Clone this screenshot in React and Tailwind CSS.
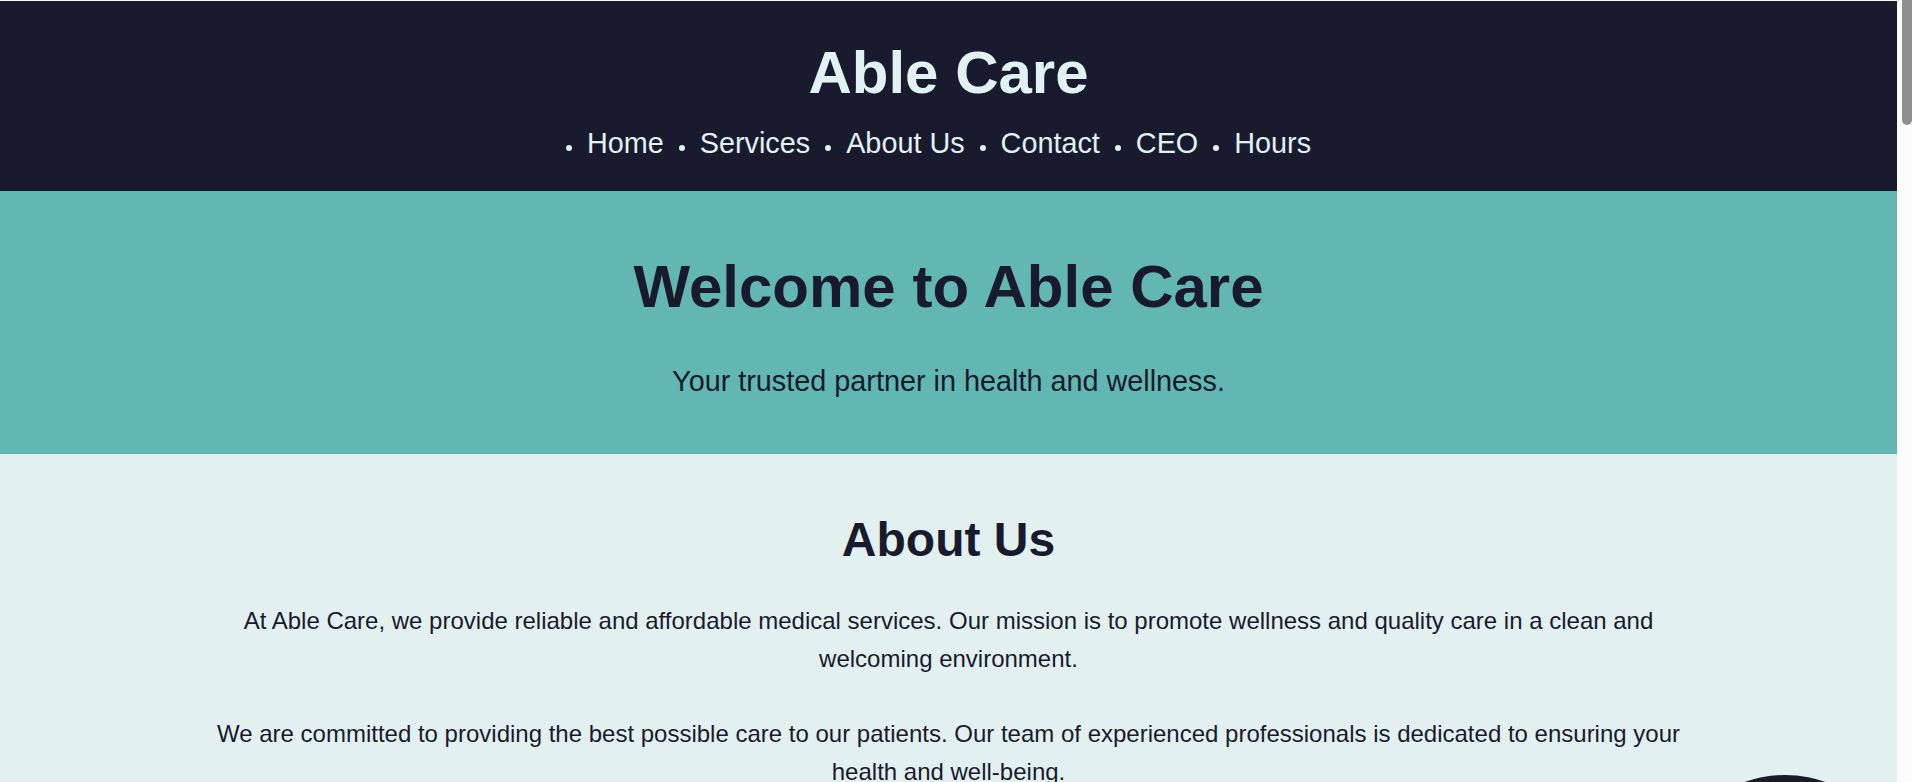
import React from "react";

const navItems = ["Home", "Services", "About Us", "Contact", "CEO", "Hours"];

export default function App() {
  return (
    <div className="flex h-[782px] w-full overflow-hidden bg-white font-['Liberation_Sans',Arial,sans-serif]">
      <div className="relative min-w-0 flex-1 overflow-hidden pt-px">
        <header className="bg-[#1a1a2e] pb-[32px] pt-[37px] text-center text-[#e0f2f1]">
          <h1 className="text-[60px] font-bold leading-[69px]">Able Care</h1>
          <nav className="mt-[20px]">
            <ul className="flex justify-center pr-[20px] text-[28.8px] leading-[32px]">
              {navItems.map((item, i) => (
                <li
                  key={item}
                  className={`flex items-center ${i === 0 ? "" : "ml-[15px]"}`}
                >
                  <span className="mr-[15px] inline-block h-[6px] w-[6px] translate-y-[5px] rounded-full bg-[#e0f2f1]"></span>
                  <a href="#" className="text-[#e0f2f1]">
                    {item}
                  </a>
                </li>
              ))}
            </ul>
          </nav>
        </header>

        <section className="bg-[#63b7b2] pb-[57px] pt-[61px] text-center text-[#1a1a2e]">
          <h2 className="text-[60px] font-bold leading-[69px]">Welcome to Able Care</h2>
          <p className="mt-[44px] text-[28.8px] leading-[32px]">
            Your trusted partner in health and wellness.
          </p>
        </section>

        <section className="relative bg-[#e2f1f0] pt-[58px] text-center text-[#1a1a2e]">
          <h2 className="text-[48px] font-bold leading-[55px]">About Us</h2>
          <div className="mx-auto mt-[35px] max-w-[1500px] text-[24px] leading-[38.4px]">
            <p>
              At Able Care, we provide reliable and affordable medical services. Our mission is to
              promote wellness and quality care in a clean and welcoming environment.
            </p>
            <p className="mt-[36px]">
              We are committed to providing the best possible care to our patients. Our team of
              experienced professionals is dedicated to ensuring your health and well-being.
            </p>
            <p className="mt-[36px]">
              Our clinic is equipped with modern facilities and staffed by caring specialists who
              put your comfort first.
            </p>
          </div>
          <div className="h-[200px]"></div>
          <div className="absolute left-[1665px] top-[321px] h-[240px] w-[240px] rounded-full bg-[#1a1a2e]"></div>
        </section>
      </div>
      <div className="flex w-[15px] shrink-0 justify-end bg-[#fcfcfc]">
        <div className="h-[125px] w-[10px] rounded-b-[5px] bg-[#8f8f8f]"></div>
      </div>
    </div>
  );
}
